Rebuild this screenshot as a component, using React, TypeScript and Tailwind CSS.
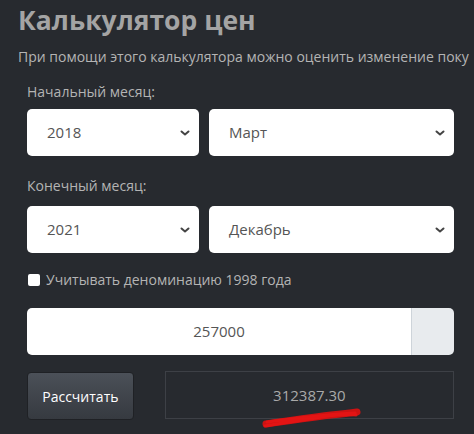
import React from 'react';

const Chevron = () => (
  <svg width="12" height="8" viewBox="0 0 12 8" className="shrink-0">
    <path d="M2.5 2.5 L6 5.5 L9.5 2.5" fill="none" stroke="#444" strokeWidth="2" strokeLinecap="round" strokeLinejoin="round" />
  </svg>
);

const Select = ({ value, className }: { value: string; className: string }) => (
  <div className={`h-[47px] bg-white rounded-[5px] flex items-center justify-between pl-[20px] pr-[8px] text-[15px] text-[#555] ${className}`}>
    <span>{value}</span>
    <Chevron />
  </div>
);

export default function App() {
  return (
    <div className="w-[474px] h-[434px] bg-[#272a2f] overflow-hidden" style={{ fontFamily: '"Open Sans", "Noto Sans", sans-serif' }}>
      <h1 className="pl-[18px] pt-[1px] text-[26.5px] leading-[38px] font-bold text-[#a4a4a4]">Калькулятор цен</h1>
      <p className="pl-[18px] pr-[4px] mt-[8px] text-[14px] leading-[20px] text-[#b4b4b4] whitespace-nowrap overflow-hidden">
        При помощи этого калькулятора можно оценить изменение поку
      </p>

      <div className="pl-[27px] pr-[20px] mt-[15px]">
        <div className="text-[14px] leading-[20px] text-[#b4b4b4]">Начальный месяц:</div>
        <div className="flex gap-[10px] mt-[7px]">
          <Select value="2018" className="w-[172px]" />
          <Select value="Март" className="w-[245px]" />
        </div>

        <div className="text-[14px] leading-[20px] text-[#b4b4b4] mt-[20px]">Конечный месяц:</div>
        <div className="flex gap-[10px] mt-[10px]">
          <Select value="2021" className="w-[172px]" />
          <Select value="Декабрь" className="w-[245px]" />
        </div>

        <label className="flex items-center gap-[6px] mt-[17px] text-[14px] leading-[20px] text-[#b4b4b4]">
          <span className="w-[12px] h-[12px] bg-white rounded-[2px] ml-[1px]" />
          Учитывать деноминацию 1998 года
        </label>

        <div className="flex mt-[18px] w-[427px] h-[47px] rounded-[5px] overflow-hidden">
          <div className="flex-1 bg-white flex items-center justify-center text-[15px] text-[#555]">257000</div>
          <div className="w-[43px] bg-[#e8ebee] border-l border-[#ced4da]" />
        </div>

        <div className="flex mt-[17px] gap-[31px]">
          <button className="w-[107px] h-[48px] rounded-[4px] border border-[#1f2125] bg-gradient-to-b from-[#4b5058] to-[#363a40] text-white text-[14px] flex items-center justify-center">
            Рассчитать
          </button>
          <div className="relative w-[290px] h-[48px] border border-[#3d4046] flex items-center justify-center text-[15px] text-[#a9a9a9] -mt-[1px]">
            312387.30
            <svg className="absolute left-[95px] top-[35px]" width="100" height="22" viewBox="0 0 100 22">
              <path d="M5 17 C25 14 45 11 70 8 C82 7 90 6 96 5" fill="none" stroke="#e01010" strokeWidth="7" strokeLinecap="round" opacity="0.9" />
              <path d="M4 19 C20 16 45 13 60 10 C75 8 88 7 95 8 M6 15 C30 12 55 8 94 6" fill="none" stroke="#e81515" strokeWidth="3" strokeLinecap="round" opacity="0.8" />
            </svg>
          </div>
        </div>
      </div>
    </div>
  );
}
